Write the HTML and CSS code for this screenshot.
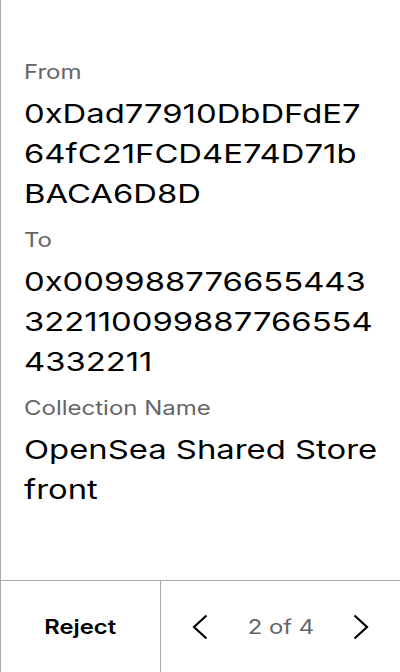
FILE: index.html
```html
<!DOCTYPE html>
<html lang="en">
<head>
<meta charset="utf-8">
<title>Sign request</title>
<link rel="stylesheet" href="styles.css">
</head>
<body>
<div class="screen">
  <main class="content">
    <div class="field">
      <div class="label">From</div>
      <div class="value">0xDad77910DbDFdE764fC21FCD4E74D71bBACA6D8D</div>
    </div>
    <div class="field">
      <div class="label">To</div>
      <div class="value">0x0099887766554433221100998877665544332211</div>
    </div>
    <div class="field">
      <div class="label">Collection Name</div>
      <div class="value">OpenSea Shared Storefront</div>
    </div>
  </main>
  <footer class="footer">
    <button class="reject"><span class="wide">Reject</span></button>
    <div class="pager">
      <svg class="chev" width="16" height="26" viewBox="0 0 16 26"><polyline points="14.5,1.5 2,13 14.5,24.5" fill="none" stroke="#000" stroke-width="2.2"/></svg>
      <span class="count wide">2 of 4</span>
      <svg class="chev" width="16" height="26" viewBox="0 0 16 26"><polyline points="1.5,1.5 14,13 1.5,24.5" fill="none" stroke="#000" stroke-width="2.2"/></svg>
    </div>
  </footer>
</div>
</body>
</html>
```
FILE: styles.css
```css
* { box-sizing: border-box; }
html, body { margin: 0; padding: 0; background: #fff; }
body { font-family: Inter, "Noto Sans", sans-serif; color: #000; }
.screen {
  width: 400px;
  height: 672px;
  border-left: 1px solid #a9a9a9;
  display: flex;
  flex-direction: column;
}
.content {
  flex: 1;
  padding: 58px 22.5px 0 23px;
}
.field { margin-bottom: 12px; }
.label {
  font-size: 20px;
  line-height: 28px;
  color: #666;
  margin-bottom: 8px;
  width: calc(100% / 1.2);
  transform: scaleX(1.2);
  transform-origin: 0 0;
}
.value {
  font-size: 26px;
  line-height: 40px;
  word-break: break-all;
  width: calc(100% / 1.262);
  transform: scaleX(1.262);
  transform-origin: 0 0;
}
.footer {
  height: 92px;
  border-top: 1px solid #a9a9a9;
  display: flex;
}
.reject {
  width: 160px;
  border: 0;
  border-right: 1px solid #a9a9a9;
  background: transparent;
  font-family: inherit;
  font-size: 20px;
  font-weight: 600;
  color: #000;
  padding: 0;
}
.wide {
  display: inline-block;
  transform: scaleX(1.19);
  transform-origin: 50% 50%;
}
.pager {
  flex: 1;
  display: flex;
  align-items: center;
  justify-content: center;
  gap: 45px;
}
.count {
  font-size: 20px;
  color: #666;
}
.chev { display: block; }
```
